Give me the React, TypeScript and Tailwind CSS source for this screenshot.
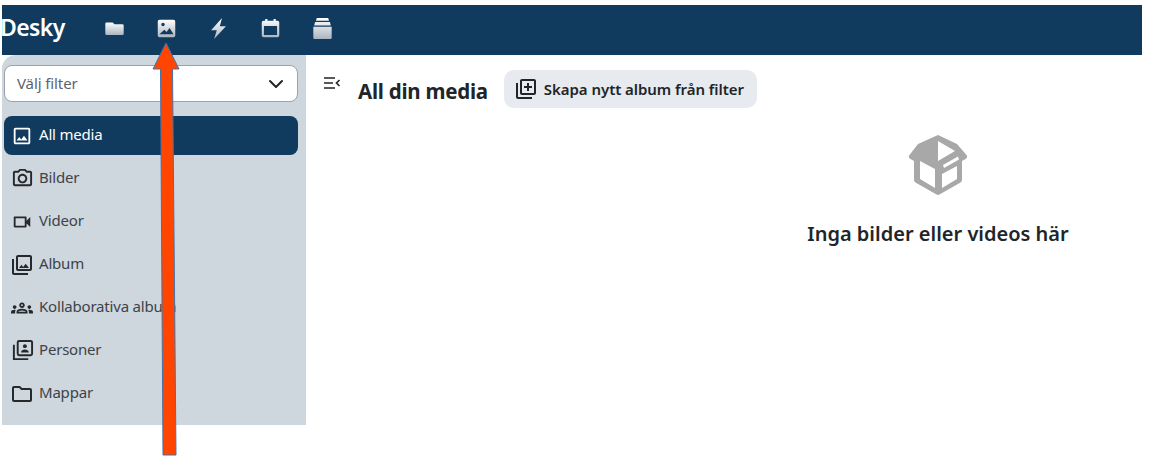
import type { ReactNode } from "react";
import {
  MdOutlineFolder,
  MdOutlineGroups,
  MdOutlineImage,
  MdOutlineLibraryAdd,
  MdOutlinePhotoCamera,
  MdOutlinePhotoLibrary,
  MdOutlineVideocam,
} from "react-icons/md";

function HeaderIcon({ children }: { children: ReactNode }) {
  return (
    <svg viewBox="0 0 24 24" width="21" height="21" fill="url(#fade)">
      {children}
    </svg>
  );
}

function PeopleAlbumIcon() {
  return (
    <svg viewBox="0 0 24 24" width="23" height="23" fill="none" stroke="currentColor" strokeWidth="2">
      <path d="M3 6v15h15" />
      <rect x="7" y="2" width="15" height="15" rx="1.5" />
      <circle cx="14.5" cy="7.5" r="2" fill="currentColor" stroke="none" />
      <path d="M10.5 14c0-2 2-3 4-3s4 1 4 3z" fill="currentColor" stroke="none" />
    </svg>
  );
}

const NAV_ITEMS = [
  { label: "All media", icon: <MdOutlineImage size={22} />, active: true },
  { label: "Bilder", icon: <MdOutlinePhotoCamera size={23} /> },
  { label: "Videor", icon: <MdOutlineVideocam size={22} /> },
  { label: "Album", icon: <MdOutlinePhotoLibrary size={24} /> },
  { label: "Kollaborativa album", icon: <MdOutlineGroups size={22} /> },
  { label: "Personer", icon: <PeopleAlbumIcon /> },
  { label: "Mappar", icon: <MdOutlineFolder size={24} /> },
];

export default function App() {
  return (
    <div className="relative h-[468px] w-[1152px] overflow-hidden bg-white pt-[5px] pl-[2px] pr-[10px] font-['Noto_Sans','Open_Sans',sans-serif] text-[#212529]">
      <svg width="0" height="0" className="absolute">
        <defs>
          <linearGradient id="fade" x1="0" y1="0" x2="0" y2="1">
            <stop offset="0" stopColor="#ffffff" />
            <stop offset="1" stopColor="#aab5c0" />
          </linearGradient>
        </defs>
      </svg>

      <header className="flex h-[50px] items-center overflow-hidden bg-[#103a5e] text-white">
        <span className="-ml-[2px] w-[104px] pb-[5px] text-[23px] leading-none font-semibold tracking-[-0.6px]">Desky</span>
        <nav className="flex items-center gap-[31px] pb-[3px]">
          <HeaderIcon>
            <path d="M3 5h7l2 2h9a1.500 1.500 0 0 1 1.500 1.500V18a1.500 1.500 0 0 1-1.500 1.500H3A1.500 1.500 0 0 1 1.500 18V6.500A1.500 1.500 0 0 1 3 5z" />
          </HeaderIcon>
          <HeaderIcon>
            <path
              fillRule="evenodd"
              d="M4 2h16a2 2 0 0 1 2 2v16a2 2 0 0 1-2 2H4a2 2 0 0 1-2-2V4a2 2 0 0 1 2-2zm4 3.500a2 2 0 1 0 0 4 2 2 0 0 0 0-4zM4 18.500h16l-4.500-7-3.500 4.500-2.500-2.500z"
            />
          </HeaderIcon>
          <HeaderIcon>
            <path d="M16 0 3.500 14H10L7 24 20.500 9.500H13.500z" />
          </HeaderIcon>
          <HeaderIcon>
            <path
              fillRule="evenodd"
              d="M6 1h2.500v2h7V1H18v2h2a2 2 0 0 1 2 2v15a2 2 0 0 1-2 2H4a2 2 0 0 1-2-2V5a2 2 0 0 1 2-2h2zM4.500 9v10.500h15V9z"
            />
          </HeaderIcon>
          <HeaderIcon>
            <path d="M5.500 0h13l1 3H4.500zM3.500 4.500h17l1 4h-19zM1.500 10h21v12.500a1.500 1.500 0 0 1-1.500 1.500H3a1.500 1.500 0 0 1-1.500-1.500z" />
          </HeaderIcon>
        </nav>
      </header>

      <div className="flex">
        <aside className="h-[370px] w-[304px] shrink-0 rounded-tl-[14px] bg-[#ced6de] pt-[10px] pr-[8px] pl-[2px]">
          <div className="flex h-[37px] items-center justify-between rounded-[8px] border border-[#9aa3ab] bg-white pr-[13px] pl-[12px] text-[15px] tracking-[-0.1px] text-[#5c636a]">
            <span>Välj filter</span>
            <svg viewBox="0 0 16 16" width="16" height="16" fill="none" stroke="#212529" strokeWidth="2" strokeLinecap="round" strokeLinejoin="round">
              <path d="m2 5 6 6 6-6" />
            </svg>
          </div>

          <ul className="mt-[14px] flex flex-col gap-[4px] text-[15px] tracking-[-0.2px]">
            {NAV_ITEMS.map((item) => (
              <li
                key={item.label}
                className={
                  item.active
                    ? "flex h-[39px] items-center rounded-[8px] bg-[#103a5e] text-white"
                    : "flex h-[39px] items-center rounded-[8px] text-[#3d4349]"
                }
              >
                <span className={item.active ? "flex w-[35px] shrink-0 justify-center pl-[1px] text-white" : "flex w-[35px] shrink-0 justify-center pl-[1px] text-[#26292c]"}>
                  {item.icon}
                </span>
                <span className="pb-[2px]">{item.label}</span>
              </li>
            ))}
          </ul>
        </aside>

        <main className="min-w-0 flex-1">
          <div className="flex items-start pt-[15px] pl-[17px]">
            <svg viewBox="0 0 18 14" width="18" height="14" fill="none" stroke="#212529" strokeWidth="1.600" className="mt-[6px]">
              <path d="M1 2h11M1 7h9M1 12h11M16.500 4 13.500 7l3 3" />
            </svg>
            <h1 className="mt-[6px] ml-[17px] text-[20.500px] leading-[30px] font-bold tracking-[-0.25px]">All din media</h1>
            <button type="button" className="ml-[16px] flex h-[38px] items-center gap-[6px] rounded-[10px] bg-[#e7eaee] pr-[13px] pl-[10px] text-[15px] font-semibold tracking-[-0.05px]">
              <MdOutlineLibraryAdd size={24} />
              Skapa nytt album från filter
            </button>
          </div>

          <div className="mt-[26px] ml-[502px] flex w-[260px] flex-col items-center">
            <svg viewBox="0 0 60 62" width="60" height="62" fill="#a8a8a8">
              <path
                fillRule="evenodd"
                d="M30 1 49 10 58.500 21a2.500 2.500 0 0 1-1 4L54 27V46a3 3 0 0 1-1.500 2.500L31.500 60.500a3 3 0 0 1-3 0L7.500 48.500A3 3 0 0 1 6 46V27L2.500 25a2.500 2.500 0 0 1-1-4L10 10zM30 7V27L47 17zM12 27V45L27 54V35zM35 31 50 22.500l1 3L36 34zM34 40V54L49 45V32z"
              />
            </svg>
            <p className="mt-[23px] text-[20px] leading-[30px] font-semibold whitespace-nowrap">Inga bilder eller videos här</p>
          </div>
        </main>
      </div>

      {/* annotation arrow lying over the screenshot */}
      <svg viewBox="0 0 1152 468" width="1152" height="468" className="pointer-events-none absolute top-0 left-0">
        <path d="M166 43 179 69H172.500L176 455H163L160.500 69H153z" fill="#ff4500" stroke="#4472a8" strokeWidth="1" />
      </svg>
    </div>
  );
}
